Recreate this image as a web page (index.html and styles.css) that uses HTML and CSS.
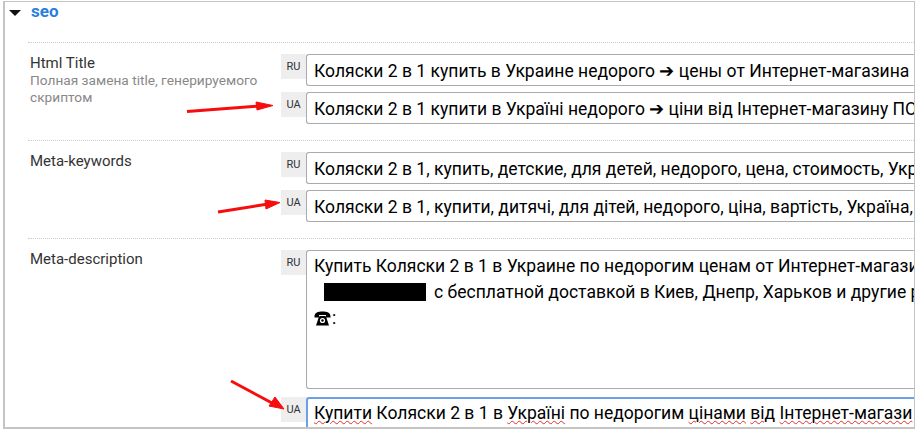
FILE: index.html
```html
<!DOCTYPE html>
<html lang="ru">
<head>
    <meta charset="UTF-8">
    <meta name="viewport" content="width=device-width, initial-scale=1.0">
    <title>SEO</title>
    <link rel="stylesheet" href="styles.css">
</head>
<body>
    <div class="panel">
        <div class="panel-head">
            <span class="caret"></span>
            <span class="panel-title">seo</span>
        </div>

        <!-- Html Title -->
        <div class="row">
            <div class="label">
                <div class="label-name">Html Title</div>
                <div class="label-hint">Полная замена title, генерируемого скриптом</div>
            </div>
            <div class="fields">
                <div class="field">
                    <span class="lang">RU</span>
                    <div class="input">Коляски 2 в 1 купить в Украине недорого ➔ цены от Интернет-магазина</div>
                </div>
                <div class="field">
                    <span class="lang">UA</span>
                    <div class="input">Коляски 2 в 1 купити в Україні недорого ➔ ціни від Інтернет-магазину ПО</div>
                </div>
            </div>
        </div>

        <!-- Meta-keywords -->
        <div class="row">
            <div class="label">
                <div class="label-name">Meta-keywords</div>
            </div>
            <div class="fields">
                <div class="field">
                    <span class="lang">RU</span>
                    <div class="input">Коляски 2 в 1, купить, детские, для детей, недорого, цена, стоимость, Укр</div>
                </div>
                <div class="field">
                    <span class="lang">UA</span>
                    <div class="input">Коляски 2 в 1, купити, дитячі, для дітей, недорого, ціна, вартість, Україна,</div>
                </div>
            </div>
        </div>

        <!-- Meta-description -->
        <div class="row row-last">
            <div class="label">
                <div class="label-name">Meta-description</div>
            </div>
            <div class="fields">
                <div class="field field-tall">
                    <span class="lang">RU</span>
                    <div class="input input-area">
                        <div class="area-line">Купить Коляски 2 в 1 в Украине по недорогим ценам от Интернет-магази</div>
                        <div class="area-line"><span class="redacted"></span>с бесплатной доставкой в Киев, Днепр, Харьков и другие р</div>
                        <div class="area-line"><svg class="phone" width="17" height="15" viewBox="0 0 17 15"><path d="M0.5 5.5 C0.5 1.5 4 0.5 8.5 0.5 C13 0.5 16.5 1.5 16.5 5.5 L16.5 6.5 L12 6.5 L12 4 L5 4 L5 6.5 L0.5 6.5 Z M4.5 7 L5.5 5 L11.5 5 L12.5 7 L15 14.5 L2 14.5 Z" fill="#000"/><circle cx="8.5" cy="9.5" r="2.6" fill="#fff"/><circle cx="8.5" cy="9.5" r="1.2" fill="#000"/></svg>:</div>
                    </div>
                </div>
                <div class="field">
                    <span class="lang">UA</span>
                    <div class="input input-focus"><span class="typo">Купити</span> Коляски 2 в 1 в <span class="typo">Україні</span> по недорогим <span class="typo">цінами</span> <span class="typo">від</span> <span class="typo">Інтернет-магази</span></div>
                </div>
            </div>
        </div>
    </div>

    <!-- Красные стрелки поверх скриншота -->
    <svg class="arrows" width="923" height="431" viewBox="0 0 923 431">
        <g fill="#f60d0d" stroke="#f60d0d">
            <path d="M187 111.5 L260 106" stroke-width="3" fill="none"/>
            <path d="M256 102 L273 105.5 L257 110 Z" stroke-width="1"/>
            <path d="M218 212 L268 204" stroke-width="3" fill="none"/>
            <path d="M265 200 L280 202.5 L266 209 Z" stroke-width="1"/>
            <path d="M231 381 L272 403" stroke-width="3" fill="none"/>
            <path d="M275 397 L284 409 L269 406 Z" stroke-width="1"/>
        </g>
    </svg>
</body>
</html>
```

FILE: styles.css
```css
/* Общие стили */
body {
    margin: 0;
    background-color: #fff;
    font-family: Roboto, Arial, sans-serif;
    color: #222;
    height: 431px;
    overflow: hidden;
}

.panel {
    box-sizing: border-box;
    width: 912px;
    height: 428px;
    margin: 1px 0 0 3px;
    border: 2px solid #c4c4c4;
    border-top-width: 1px;
    border-right-width: 1px;
    overflow: hidden;
}

/* Заголовок секции */
.panel-head {
    display: flex;
    align-items: flex-start;
    gap: 10px;
    height: 40px;
    padding: 0 0 0 4px;
    box-sizing: border-box;
}

.caret {
    width: 0;
    height: 0;
    margin-top: 8px;
    border-left: 6px solid transparent;
    border-right: 6px solid transparent;
    border-top: 6px solid #111;
}

.panel-title {
    color: #2a7ee0;
    font-size: 17px;
    font-weight: 700;
    line-height: 18px;
}

/* Строка формы */
.row {
    display: flex;
    margin-left: 23px;
    padding: 11px 0 10px;
    border-top: 1px dotted #ccc;
}

.row-last {
    padding-bottom: 0;
}

.label {
    flex: 0 0 253px;
    padding-left: 2px;
    box-sizing: border-box;
}

.label-name {
    font-size: 15px;
    line-height: 18px;
    color: #333;
}

.label-hint {
    width: 240px;
    font-size: 13.7px;
    line-height: 17px;
    color: #888;
}

.fields {
    flex: 1;
    min-width: 0;
}

.field {
    display: flex;
    align-items: flex-start;
    margin-bottom: 6px;
}

.field-tall {
    margin-bottom: 8px;
}

.lang {
    flex: 0 0 25px;
    height: 25px;
    background-color: #eee;
    font-size: 11px;
    line-height: 25px;
    text-align: center;
    color: #333;
}

.input {
    flex: 1;
    min-width: 0;
    box-sizing: border-box;
    height: 32px;
    padding: 0 7px;
    border: 1px solid #aaa;
    border-right: none;
    border-radius: 3px 0 0 3px;
    background-color: #fff;
    color: #000;
    font-size: 17.55px;
    line-height: 33px;
    white-space: nowrap;
    overflow: hidden;
}

.input-area {
    height: 139px;
    padding-top: 2px;
    line-height: 27px;
}

.area-line {
    height: 26px;
}

.phone {
    vertical-align: -2px;
    margin-right: 1px;
}

.input-focus {
    border: 2px solid #6b9fe8;
    border-right: none;
    border-bottom: none;
    padding-left: 6px;
    line-height: 29px;
}

.typo {
    text-decoration: underline wavy #e03030 1px;
    text-underline-offset: 1px;
}

.redacted {
    display: inline-block;
    width: 102px;
    height: 18px;
    margin: 0 8px 0 10px;
    background-color: #000;
    vertical-align: -3px;
}

/* Стрелки */
.arrows {
    position: absolute;
    left: 0;
    top: 0;
    pointer-events: none;
}
```
